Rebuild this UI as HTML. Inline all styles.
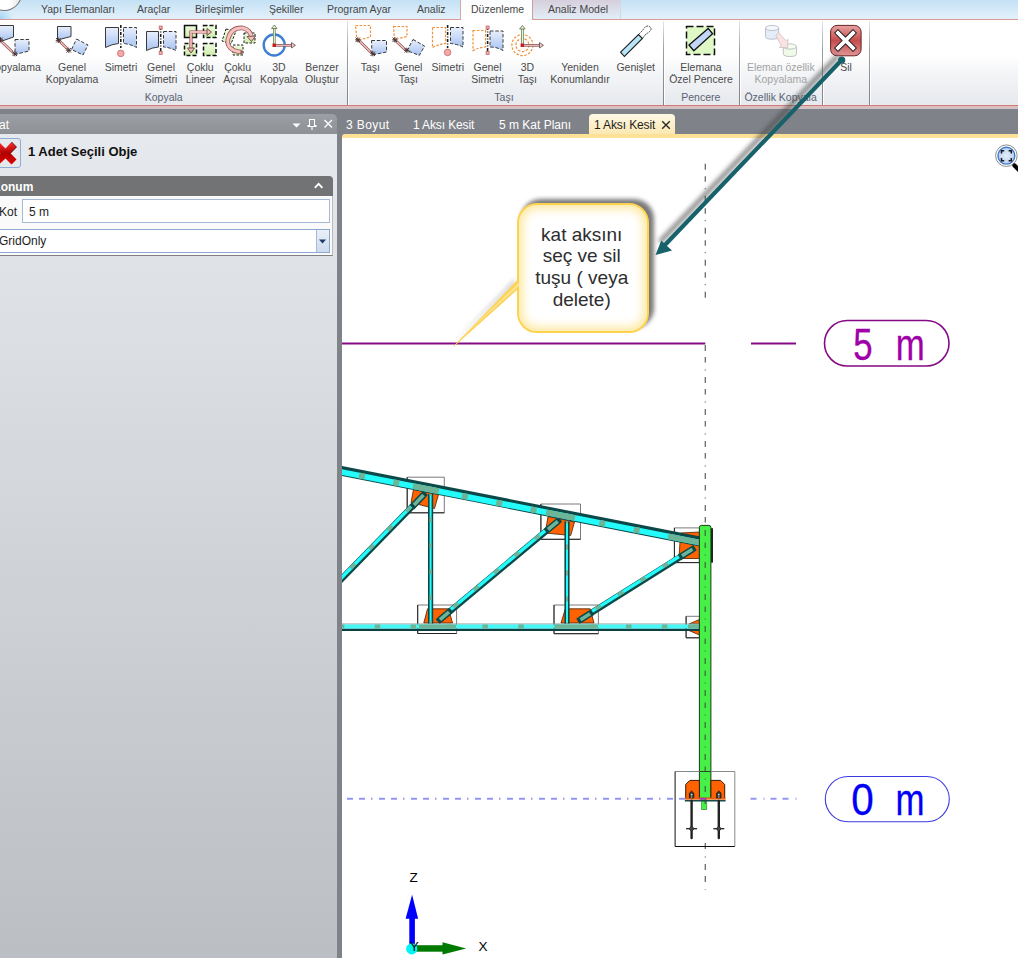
<!DOCTYPE html>
<html><head><meta charset="utf-8">
<style>
*{margin:0;padding:0;box-sizing:border-box}
html,body{width:1018px;height:958px;overflow:hidden;background:#7f8389;font-family:"Liberation Sans",sans-serif}
.a{position:absolute}
#tabstrip{left:0;top:0;width:1018px;height:20px;background:linear-gradient(#c4e1f5,#e3f1fb);border-bottom:1px solid #d99a96}
.rt{position:absolute;top:3px;font-size:10.5px;color:#474747;white-space:nowrap}
#ribbon{left:0;top:20px;width:1018px;height:86px;background:linear-gradient(#ffffff 0%,#ffffff 42%,#f4f5f7 62%,#e6e9ed 100%);border-bottom:1px solid #cf7c79}
#ribbon2{left:0;top:106px;width:1018px;height:3px;background:linear-gradient(#e6b9b9,#c9c5c9)}
.sep{position:absolute;top:21px;width:1px;height:84px;background:linear-gradient(#e6e8eb,#9a9ea4 35%,#80848a);box-shadow:1px 0 0 #fff}
.lbl{position:absolute;font-size:10.5px;color:#4a4a4a;text-align:center;white-space:nowrap;line-height:12px}
.glbl{position:absolute;top:91px;font-size:10.5px;color:#5a6374;text-align:center;white-space:nowrap}
#panel{left:0;top:134px;width:337px;height:824px;background:linear-gradient(#e6e9ee,#bbbfc3)}
#phead{left:0;top:114px;width:337px;height:20px;background:linear-gradient(#9c9fa4,#8d9095);border-top-right-radius:5px}
#canvas{left:342px;top:134px;width:676px;height:824px;background:#fff;border-top:4px solid #fde196;border-top-left-radius:3px}
.dt{position:absolute;top:118px;font-size:12px;color:#fff;white-space:nowrap}
</style></head><body>
<!-- ribbon tab strip -->
<div id="tabstrip" class="a"></div>
<div class="a" style="left:0;top:8px;width:14px;height:11px;background:radial-gradient(ellipse at 0% 100%,#9fd2f3 0%,rgba(190,225,248,0) 70%)"></div>
<div class="a" style="left:-14px;top:-24px;width:36px;height:35px;border-radius:50%;background:radial-gradient(circle at 35% 85%,#fff 30%,#e6e6e6 60%,#b8b8b8 100%);border:1.6px solid #6f7378"></div>
<div class="rt" style="left:41px">Yapı Elemanları</div>
<div class="rt" style="left:137px">Araçlar</div>
<div class="rt" style="left:195px">Birleşimler</div>
<div class="rt" style="left:269px">Şekiller</div>
<div class="rt" style="left:327px">Program Ayar</div>
<div class="rt" style="left:417px">Analiz</div>
<div class="a" style="left:460px;top:0;width:73px;height:21px;background:linear-gradient(#fbfcfd,#ffffff);border:1px solid #d9a7a4;border-top:none;border-bottom:none"></div>
<div class="rt" style="left:471px">Düzenleme</div>
<div class="a" style="left:532px;top:0;width:89px;height:19px;background:linear-gradient(#d5cedb,#e2eff9);border-left:1px solid #d49c9a;border-right:1px solid #d6d6de;border-bottom-left-radius:2px"></div>
<div class="rt" style="left:548px">Analiz Model</div>

<!-- ribbon body -->
<div id="ribbon" class="a"></div>
<div id="ribbon2" class="a"></div>
<div class="sep" style="left:347px"></div>
<div class="sep" style="left:663px"></div>
<div class="sep" style="left:739px"></div>
<div class="sep" style="left:822px"></div>
<div class="sep" style="left:869px"></div>

<!-- ribbon icons -->
<svg class="a" style="left:0;top:0" width="1018" height="110" viewBox="0 0 1018 110">
<defs>
<linearGradient id="gb" x1="0" y1="0" x2="0" y2="1"><stop offset="0" stop-color="#e8effc"/><stop offset="1" stop-color="#a8c3f2"/></linearGradient>
<linearGradient id="gg" x1="0" y1="0" x2="0" y2="1"><stop offset="0" stop-color="#eefbdf"/><stop offset="1" stop-color="#cdeead"/></linearGradient>
<linearGradient id="gr" x1="0" y1="0" x2="0" y2="1"><stop offset="0" stop-color="#e7a2a2"/><stop offset="0.5" stop-color="#c54c4c"/><stop offset="1" stop-color="#e09696"/></linearGradient>
<linearGradient id="gbar" x1="0" y1="0" x2="1" y2="0"><stop offset="0" stop-color="#9fd9f0"/><stop offset="1" stop-color="#c8ecf8"/></linearGradient>
</defs>
<g stroke="#3a3a3a" stroke-width="1" fill="url(#gb)">
 <!-- Kopyalama (cut) -->
 <path d="M-4 25.5H13.5V37L0.5 41.5H-4Z"/>
 <path d="M15 39.5H29V51L15 54.5Z" stroke-dasharray="3.5 1.8"/>
 <!-- Genel Kopyalama -->
 <path d="M57.5 26.5H71V36.5L57.5 40Z"/>
 <path d="M76.5 39L88 45L83 55L71.5 49.5Z" stroke-dasharray="3.5 1.8"/>
 <!-- Simetri -->
 <path d="M105.5 27.5H118.5V43.5Q112 44 105.5 47.5Z"/>
 <path d="M123.5 27.5H136.5V47.5Q130 44 123.5 43.5Z" stroke-dasharray="3.5 1.8"/>
 <!-- Genel Simetri -->
 <path d="M146.5 31.5H158.5V47Q152 47.5 146.5 50.5Z"/>
 <path d="M163.5 31.5H176V50.5Q170 47.5 163.5 47Z" stroke-dasharray="3.5 1.8"/>
 <!-- Taşı group blue shapes -->
 <path d="M371.5 40.5H386.5V52L372 55Z" stroke-dasharray="3.5 1.8"/>
 <path d="M413 39.5L424.6 46L419.3 55.4L407 50.6Z" stroke-dasharray="3.5 1.8"/>
 <path d="M450.5 27.5H463V47Q457 44 450.5 43.5Z" stroke-dasharray="3.5 1.8"/>
 <path d="M490 31H503V50.5Q497 47 490 47Z" stroke-dasharray="3.5 1.8"/>
</g>
<!-- orange dashed shapes -->
<g stroke="#f0913a" stroke-width="1.2" fill="none" stroke-dasharray="2.5 1.5">
 <path d="M355.5 25.5H370.5V37L357 40.5Z"/>
 <path d="M393.5 26.5H407V36.5L394.5 39.5Z"/>
 <path d="M432.5 27.5H445.5V43.5Q439 44 432.5 47.5Z"/>
 <path d="M473 30.5H485.5V47Q479 47.5 473 50.5Z"/>
 <circle cx="522.4" cy="45.1" r="10.5"/>
 <circle cx="522.4" cy="45.1" r="6.5"/>
</g>
<!-- symmetry axes -->
<g stroke="#1e1e1e" stroke-width="1.6" stroke-dasharray="3 1.5 1 1.5">
 <path d="M120.8 25V48"/><path d="M160.7 27V52"/><path d="M447.6 25V48"/><path d="M487.6 27V52"/>
</g>
<g fill="#f4a9a9" stroke="#c46a6a" stroke-width="0.8">
 <circle cx="120.8" cy="53.4" r="3.3"/><circle cx="447.6" cy="52.4" r="3.3"/>
 <rect x="159.2" y="26" width="3" height="3"/><rect x="159.2" y="51.5" width="3" height="3"/>
 <rect x="486.1" y="26" width="3" height="3"/><rect x="486.1" y="51.5" width="3" height="3"/>
</g>
<!-- pink move arrows -->
<g stroke="#8a5050" stroke-width="2.6" stroke-linecap="round"><path d="M2 42L12 51.5"/><path d="M59.5 41L67 48.5"/><path d="M359.5 41L370 51.5"/><path d="M396 41L405 49.5"/></g>
<g stroke="#f6c4c2" stroke-width="1.3" stroke-linecap="round"><path d="M2 42L12 51.5"/><path d="M59.5 41L67 48.5"/><path d="M359.5 41L370 51.5"/><path d="M396 41L405 49.5"/></g>
<path d="M-1.7000000000000002 37.599999999999994L2.7 42.0M2.7 37.599999999999994L-1.7000000000000002 42.0M-2.1 39.8H3.1M0.5 37.199999999999996V42.4M12.600000000000001 51.599999999999994L17.0 56.0M17.0 51.599999999999994L12.600000000000001 56.0M12.200000000000001 53.8H17.400000000000002M14.8 51.199999999999996V56.4M56.099999999999994 38.099999999999994L60.5 42.5M60.5 38.099999999999994L56.099999999999994 42.5M55.699999999999996 40.3H60.9M58.3 37.699999999999996V42.9M66.6 48.099999999999994L71.0 52.5M71.0 48.099999999999994L66.6 52.5M66.2 50.3H71.39999999999999M68.8 47.699999999999996V52.9M355.6 37.599999999999994L360.0 42.0M360.0 37.599999999999994L355.6 42.0M355.2 39.8H360.40000000000003M357.8 37.199999999999996V42.4M370.6 51.599999999999994L375.0 56.0M375.0 51.599999999999994L370.6 56.0M370.2 53.8H375.40000000000003M372.8 51.199999999999996V56.4M392.6 37.599999999999994L397.0 42.0M397.0 37.599999999999994L392.6 42.0M392.2 39.8H397.40000000000003M394.8 37.199999999999996V42.4M404.6 48.099999999999994L409.0 52.5M409.0 48.099999999999994L404.6 52.5M404.2 50.3H409.40000000000003M406.8 47.699999999999996V52.9" stroke="#4a3434" stroke-width="1" fill="none"/>
<!-- Coklu Lineer -->
<g stroke="#111" stroke-width="1.5" fill="url(#gg)">
 <rect x="184.5" y="25.5" width="12" height="12"/>
 <rect x="203.5" y="25.5" width="12.5" height="12" stroke-dasharray="4 2"/>
 <rect x="184.5" y="43.5" width="12" height="12" stroke-dasharray="4 2"/>
 <rect x="203.5" y="43.5" width="12.5" height="12" stroke-dasharray="4 2"/>
</g>
<g fill="none" stroke="#8a4e4e" stroke-width="3.2"><path d="M191 52V32H209"/></g>
<g fill="none" stroke="#f4b9b7" stroke-width="1.8"><path d="M191 52V32H209"/></g>
<path d="M187.5 48L191 53L194.5 48Z M207 28.5L211.5 32L207 35.5Z" fill="#f4b9b7" stroke="#5a3a3a" stroke-width="0.8"/>
<!-- Coklu Acisal -->
<g stroke="#1e1e1e" stroke-width="1" fill="url(#gg)" stroke-dasharray="2.5 1.5">
 <path d="M226 29L236 31L231 44L222 41Z"/>
 <rect x="244" y="33" width="11" height="10"/>
 <rect x="233" y="45" width="10" height="10"/>
</g>
<path d="M240.5 52Q226 50 228 39Q231 27 243 28Q251 30 251.5 38" fill="none" stroke="#9a5a5a" stroke-width="4.6" stroke-linecap="round"/>
<path d="M240.5 52Q226 50 228 39Q231 27 243 28Q251 30 251.5 38" fill="none" stroke="#f6c2c0" stroke-width="3"/>
<path d="M247 36.5L251.5 41.5L255.5 36Z" fill="#f6c2c0" stroke="#5a3a3a" stroke-width="0.8"/>
<!-- 3D Kopyala -->
<circle cx="274.2" cy="45" r="10.5" fill="none" stroke="#3f7fd2" stroke-width="2.4"/>
<path d="M274.3 45V27" stroke="#5a7a4a" stroke-width="2.6"/><path d="M274.3 45V27" stroke="#e6f7d0" stroke-width="1.2"/>
<path d="M271.5 28.5L274.3 25L277 28.5Z" fill="#e6f7d0" stroke="#4a5a3a" stroke-width="0.7"/>
<path d="M274.3 45.3H293" stroke="#7a4a4a" stroke-width="2.6"/><path d="M274.3 45.3H293" stroke="#f6c6c4" stroke-width="1.2"/>
<path d="M291.5 42.5L295.5 45.3L291.5 48Z" fill="#f6c6c4" stroke="#4a3a3a" stroke-width="0.7"/>
<rect x="272.5" y="43.5" width="3.5" height="3.5" fill="#c82020"/>
<!-- 3D Tasi -->
<path d="M522.4 45V27.5" stroke="#5a7a4a" stroke-width="2.6"/><path d="M522.4 45V27.5" stroke="#e6f7d0" stroke-width="1.2"/>
<path d="M519.6 29L522.4 25.5L525.2 29Z" fill="#e6f7d0" stroke="#4a5a3a" stroke-width="0.7"/>
<path d="M522.4 45.3H541" stroke="#7a4a4a" stroke-width="2.6"/><path d="M522.4 45.3H541" stroke="#f6c6c4" stroke-width="1.2"/>
<path d="M539.5 42.5L543.5 45.3L539.5 48Z" fill="#f6c6c4" stroke="#4a3a3a" stroke-width="0.7"/>
<rect x="520.6" y="43.5" width="3.5" height="3.5" fill="#c82020"/>
<!-- Genislet -->
<path d="M638.5 34.5L643 30Q645 26 648 26Q651.5 27 651 29.5Q650 32 646 34L642.4 38.5Z" fill="#fff" stroke="#333" stroke-width="0.9" stroke-dasharray="2 0.8"/>
<path d="M620.6 52.2L638.5 34.5L642.4 38.5L624.4 56.5Z" fill="#b8e6f8" stroke="#1e1e1e" stroke-width="1.1"/>
<!-- Elemana Ozel Pencere -->
<rect x="686.5" y="26.5" width="28" height="28" fill="#def8c6" stroke="#111" stroke-width="1.5" stroke-dasharray="7 3"/>
<path d="M689 45L708.2 28.4L712.6 33.8L693.8 50.7Z" fill="#c2d6fa" stroke="#111" stroke-width="1.3"/>
<!-- Eleman ozellik kopyalama (disabled) -->
<g opacity="0.6">
 <path d="M765.5 28V36.5Q765.5 39.2 772 39.2Q778.7 39.2 778.7 36.5V28" fill="#d3e2f8" stroke="#8a8f99" stroke-width="0.9"/>
 <ellipse cx="772.1" cy="28" rx="6.6" ry="2.6" fill="#eef3fb" stroke="#8a8f99" stroke-width="0.9"/>
 <path d="M783.3 46.5V53.7Q783.3 56.5 790 56.5Q796.5 56.5 796.5 53.7V46.5" fill="#e6f8d8" stroke="#8a8f99" stroke-width="0.9"/>
 <ellipse cx="789.9" cy="46.5" rx="6.6" ry="2.6" fill="#f1fbe9" stroke="#8a8f99" stroke-width="0.9"/>
 <path d="M775.8 35.5L778.6 32.8L786.3 40.9L788 39.3L787.7 47.8L779.4 47.4L781.3 45.6Z" fill="#f8d0d0" stroke="#a08a8a" stroke-width="0.7"/>
</g>
<!-- Sil -->
<rect x="830.6" y="25.4" width="30.5" height="30.4" rx="6.5" fill="url(#gr)" stroke="#6a2222" stroke-width="1"/>
<path d="M836 31L855 50M855 31L836 50" stroke="#111" stroke-width="5.6"/>
<path d="M836.6 31.6L854.4 49.4M854.4 31.6L836.6 49.4" stroke="#fff" stroke-width="3.8"/>
</svg>

<!-- ribbon labels -->
<div class="lbl" style="left:-45.5px;top:61px;width:120px">Kopyalama</div>
<div class="lbl" style="left:12.0px;top:61px;width:120px">Genel<br>Kopyalama</div>
<div class="lbl" style="left:61.0px;top:61px;width:120px">Simetri</div>
<div class="lbl" style="left:101.0px;top:61px;width:120px">Genel<br>Simetri</div>
<div class="lbl" style="left:140.3px;top:61px;width:120px">Çoklu<br>Lineer</div>
<div class="lbl" style="left:177.6px;top:61px;width:120px">Çoklu<br>Açısal</div>
<div class="lbl" style="left:219.0px;top:61px;width:120px">3D<br>Kopyala</div>
<div class="lbl" style="left:262.0px;top:61px;width:120px">Benzer<br>Oluştur</div>
<div class="lbl" style="left:310.4px;top:61px;width:120px">Taşı</div>
<div class="lbl" style="left:348.4px;top:61px;width:120px">Genel<br>Taşı</div>
<div class="lbl" style="left:387.8px;top:61px;width:120px">Simetri</div>
<div class="lbl" style="left:427.5px;top:61px;width:120px">Genel<br>Simetri</div>
<div class="lbl" style="left:467.4px;top:61px;width:120px">3D<br>Taşı</div>
<div class="lbl" style="left:520.0px;top:61px;width:120px">Yeniden<br>Konumlandır</div>
<div class="lbl" style="left:575.7px;top:61px;width:120px">Genişlet</div>
<div class="lbl" style="left:641.0px;top:61px;width:120px">Elemana<br>Özel Pencere</div>
<div class="lbl" style="left:720.8px;top:61px;width:120px;color:#a3a3a3">Eleman özellik<br>Kopyalama</div>
<div class="lbl" style="left:786.0px;top:61px;width:120px">Sil</div>
<div class="glbl" style="left:103.7px;width:120px">Kopyala</div>
<div class="glbl" style="left:444.0px;width:120px">Taşı</div>
<div class="glbl" style="left:640.8px;width:120px">Pencere</div>
<div class="glbl" style="left:720.6px;width:120px">Özellik Kopyala</div>

<!-- left panel -->
<div id="phead" class="a"></div>
<div class="a" style="left:-1px;top:118px;font-size:12px;color:#fff">at</div>
<div id="panel" class="a"></div>
<!-- panel header icons -->
<svg class="a" style="left:285px;top:114px" width="52" height="20" viewBox="285 114 52 20">
 <path d="M292.5 123.5H300.5L296.5 127.5Z" fill="#fff"/>
 <path d="M309.5 119.5H314.5V125.5H316V126.5H308V125.5H309.5Z" fill="none" stroke="#fff" stroke-width="1.1"/>
 <path d="M312 126.5V130" stroke="#fff" stroke-width="1.2"/>
 <path d="M324.5 120L332 127.5M332 120L324.5 127.5" stroke="#fff" stroke-width="1.3"/>
</svg>
<!-- X button -->
<div class="a" style="left:-3px;top:138px;width:24px;height:30px;border:1px solid #8eaad6;border-radius:3px"></div>
<svg class="a" style="left:0;top:138px" width="22" height="30" viewBox="0 138 22 30">
 <defs><linearGradient id="rx" x1="0" y1="0" x2="0" y2="1"><stop offset="0" stop-color="#ff3030"/><stop offset="0.5" stop-color="#b00000"/><stop offset="1" stop-color="#e00000"/></linearGradient></defs>
 <path d="M-6 147L-1 142L5.5 148.5L11.5 142L16.5 147L10.5 153.2L16.5 159.5L11.5 164.5L5.5 158.5L-1 164.5L-6 159.5L0.5 153.2Z" fill="url(#rx)"/>
 <path d="M11.5 142L16.5 147L10.5 153.2" fill="none" stroke="#3a0000" stroke-width="1" opacity="0.8"/>
</svg>
<div class="a" style="left:28px;top:144px;font-size:13px;font-weight:bold;color:#111;white-space:nowrap">1 Adet Seçili Obje</div>
<!-- Konum card -->
<div class="a" style="left:-4px;top:176px;width:337px;height:20px;background:#727375;border-top-right-radius:4px"></div>
<div class="a" style="left:-8px;top:180px;font-size:12px;font-weight:bold;color:#fff;white-space:nowrap">Konum</div>
<svg class="a" style="left:312px;top:180px" width="14" height="10"><path d="M2.8 7.8L6.6 3.8L10.4 7.8" fill="none" stroke="#fff" stroke-width="1.8"/></svg>
<div class="a" style="left:-4px;top:196px;width:337px;height:60px;background:#fafafa;border-right:1px solid #b9bbbf;border-bottom:1px solid #7d7f82"></div>
<div class="a" style="left:-1px;top:205px;font-size:12px;color:#1e1e1e">Kot</div>
<div class="a" style="left:22px;top:199px;width:308px;height:24px;background:#fff;border:1px solid #a6bad8"></div>
<div class="a" style="left:29px;top:205px;font-size:12px;color:#1e1e1e">5 m</div>
<div class="a" style="left:-3px;top:229px;width:333px;height:24px;background:#fff;border:1px solid #8ea8cf"></div>
<div class="a" style="left:316px;top:230px;width:13px;height:22px;background:linear-gradient(#eaf0f8,#cddbee);border-left:1px solid #a6bad8"></div>
<svg class="a" style="left:316px;top:230px" width="13" height="22"><path d="M3 9.5H10L6.5 13.5Z" fill="#1f3a66"/></svg>
<div class="a" style="left:-1px;top:234px;font-size:12px;color:#1e1e1e">GridOnly</div>


<!-- document tabs -->
<div class="dt" style="left:346px;letter-spacing:0.4px">3 Boyut</div>
<div class="dt" style="left:413px;letter-spacing:-0.12px">1 Aksı Kesit</div>
<div class="dt" style="left:499px">5 m Kat Planı</div>
<div class="a" style="left:589px;top:114px;width:86px;height:22px;border-radius:4px 4px 0 0;background:linear-gradient(#fdf8e6,#fbe7ad)"></div>
<div class="dt" style="left:594px;color:#1e1e1e;letter-spacing:-0.12px">1 Aksı Kesit</div>
<svg class="a" style="left:660px;top:119px" width="12" height="12"><path d="M2.2 2.2L9.8 9.8M9.8 2.2L2.2 9.8" stroke="#2a2a2a" stroke-width="1.4"/></svg>

<div id="canvas" class="a"></div>
<!-- canvas drawing -->
<svg class="a" style="left:0;top:0" width="1018" height="958" viewBox="0 0 1018 958">
<defs>
<clipPath id="cv"><rect x="342" y="138" width="676" height="820"/></clipPath>
<filter id="sh1" x="-20%" y="-20%" width="140%" height="140%"><feGaussianBlur stdDeviation="2.2"/></filter>
<filter id="sh2" x="-20%" y="-20%" width="140%" height="140%"><feGaussianBlur stdDeviation="2.5"/></filter>
<radialGradient id="mg" cx="0.5" cy="0.5" r="0.5"><stop offset="0" stop-color="#e6eef9"/><stop offset="1" stop-color="#b9cff0"/></radialGradient>
</defs>
<g clip-path="url(#cv)">
<circle cx="1006.4" cy="155.7" r="10.8" fill="#fff" stroke="#8a8a8a" stroke-width="1"/>
<circle cx="1006.4" cy="155.7" r="8.4" fill="url(#mg)" stroke="#3f78c8" stroke-width="1.4"/>
<path d="M1001.5 153.5V150.8H1004.2 M1008.6 150.8H1011.3V153.5 M1011.3 158V160.7H1008.6 M1004.2 160.7H1001.5V158" fill="none" stroke="#1a1a1a" stroke-width="1.5"/>
<path d="M1014.5 165.5L1020 171" stroke="#000" stroke-width="4.2" stroke-linecap="round"/>
<path d="M705.3 163.8V298" stroke="#6a6a6a" stroke-width="1.3" stroke-dasharray="6 6.5 5.5 6.5 1 6.5"/>
<path d="M705.3 345V771" stroke="#6a6a6a" stroke-width="1.3" stroke-dasharray="6 6 5.5 7 1 6.5"/>
<path d="M705.3 843V890" stroke="#6a6a6a" stroke-width="1.3" stroke-dasharray="6 7.5 1 6.5 6 6"/>
<path d="M342 343.5H705.3 M751 343.5H796" stroke="#850a85" stroke-width="2"/>
<rect x="824.5" y="320.5" width="124.5" height="45.5" rx="22.75" fill="#fff" stroke="#850a85" stroke-width="1.6"/>
<text x="0" y="0" transform="translate(853.2 359.6) scale(0.8 1)" font-family="Liberation Sans" font-size="43.5" fill="#a000a8" stroke="#a000a8" stroke-width="0.3">5</text>
<text x="0" y="0" transform="translate(895.8 359.6) scale(0.8 1)" font-family="Liberation Sans" font-size="43.5" fill="#a000a8" stroke="#a000a8" stroke-width="0.3">m</text>
<path d="M347 798.8H706" stroke="#9696f2" stroke-width="2" stroke-dasharray="6 6 6 6 1.5 6.5"/>
<path d="M750.5 798.8H797" stroke="#9696f2" stroke-width="2" stroke-dasharray="6 7 1 6 6 6"/>
<rect x="825.3" y="776.5" width="124" height="45.2" rx="22.6" fill="#fff" stroke="#3b3be0" stroke-width="1.1"/>
<text x="0" y="0" transform="translate(851.2 815) scale(0.93 1)" font-family="Liberation Sans" font-size="43.5" fill="#0000f8" stroke="#0000f8" stroke-width="0.3">0</text>
<text x="0" y="0" transform="translate(895.5 815) scale(0.8 1)" font-family="Liberation Sans" font-size="43.5" fill="#0000f8" stroke="#0000f8" stroke-width="0.3">m</text>
<path d="M413.5 489.5L438.5 494.5L434.5 508.5L411 502.5Z" fill="#ff6200" stroke="#4a2000" stroke-width="0.8"/>
<path d="M548 516.5L574.5 522L570.7 535.5L545.2 533Z" fill="#ff6200" stroke="#4a2000" stroke-width="0.8"/>
<path d="M680.5 533L699.4 532L699.4 558.5L679 558.5Z" fill="#ff6200" stroke="#4a2000" stroke-width="0.8"/>
<path d="M423.8 623L427.5 608.8L448.6 608.8L452.5 623Z" fill="#ff6200" stroke="#4a2000" stroke-width="0.8"/>
<path d="M561 623L565.3 608.8L590.2 608.8L594 623Z" fill="#ff6200" stroke="#4a2000" stroke-width="0.8"/>
<path d="M689 624L699.4 619.5L699.4 624Z" fill="#ff6200" stroke="#4a2000" stroke-width="0.8"/>
<path d="M689 630.5L699.4 630.5L699.4 635Z" fill="#ff6200" stroke="#4a2000" stroke-width="0.8"/>
<path d="M407.2 477.2H444.3V512.8H407.2Z" fill="none" stroke="#7a7a7a" stroke-width="1"/>
<path d="M407.2 477.2V512.8H444.3" fill="none" stroke="#222" stroke-width="1"/>
<path d="M417.7 605.0H456.6V633.5H417.7Z" fill="none" stroke="#7a7a7a" stroke-width="1"/>
<path d="M417.7 605.0V633.5H456.6" fill="none" stroke="#222" stroke-width="1"/>
<path d="M540.9 504.0H580.5V539.3H540.9Z" fill="none" stroke="#7a7a7a" stroke-width="1"/>
<path d="M540.9 504.0V539.3H580.5" fill="none" stroke="#222" stroke-width="1"/>
<path d="M554.0 605.0H598.4V633.7H554.0Z" fill="none" stroke="#7a7a7a" stroke-width="1"/>
<path d="M554.0 605.0V633.7H598.4" fill="none" stroke="#222" stroke-width="1"/>
<path d="M674.4 527.9H699.4V562.6H674.4Z" fill="none" stroke="#7a7a7a" stroke-width="1"/>
<path d="M674.4 527.9V562.6H699.4" fill="none" stroke="#222" stroke-width="1"/>
<path d="M686.1 616.3H699.4V637.8H686.1Z" fill="none" stroke="#7a7a7a" stroke-width="1"/>
<path d="M686.1 616.3V637.8H699.4" fill="none" stroke="#222" stroke-width="1"/>
<path d="M430.6 494.0L430.6 624.0" stroke="#0c4848" stroke-width="5.2"/><path d="M430.6 494.0L430.6 624.0" stroke="#24fbfb" stroke-width="2.0"/><path d="M430.6 494.0L430.6 624.0" stroke="#6cb598" stroke-width="2.0" stroke-dasharray="5 21" stroke-dashoffset="3"/>
<path d="M567.0 521.5L567.0 624.0" stroke="#0c4848" stroke-width="5.2"/><path d="M567.0 521.5L567.0 624.0" stroke="#24fbfb" stroke-width="2.0"/><path d="M567.0 521.5L567.0 624.0" stroke="#6cb598" stroke-width="2.0" stroke-dasharray="5 21" stroke-dashoffset="3"/>
<path d="M320.0 601.0L423.5 495.0" stroke="#0c4848" stroke-width="6.2"/><path d="M319.4 600.4L422.9 494.4" stroke="#24fbfb" stroke-width="3.4"/><path d="M319.4 600.4L422.9 494.4" stroke="#6cb598" stroke-width="3.4" stroke-dasharray="6 20.5" stroke-dashoffset="8"/>
<path d="M440.0 619.7L557.8 521.3" stroke="#0c4848" stroke-width="6.2"/><path d="M439.4 619.0L557.2 520.6" stroke="#24fbfb" stroke-width="3.4"/><path d="M439.4 619.0L557.2 520.6" stroke="#6cb598" stroke-width="3.4" stroke-dasharray="6 20.5" stroke-dashoffset="8"/>
<path d="M580.5 619.7L692.4 549.3" stroke="#0c4848" stroke-width="6.2"/><path d="M580.0 618.9L691.9 548.5" stroke="#24fbfb" stroke-width="3.4"/><path d="M580.0 618.9L691.9 548.5" stroke="#6cb598" stroke-width="3.4" stroke-dasharray="6 20.5" stroke-dashoffset="8"/>
<path d="M423.5 495L414 505" stroke="#0c4848" stroke-width="6.2" stroke-linecap="square"/>
<path d="M423.5 495L414 505" stroke="#6cb598" stroke-width="3.6"/>
<path d="M440 619.7L449 612" stroke="#0c4848" stroke-width="6.2" stroke-linecap="square"/>
<path d="M440 619.7L449 612" stroke="#6cb598" stroke-width="3.6"/>
<path d="M557.8 521.3L548 529.5" stroke="#0c4848" stroke-width="6.2" stroke-linecap="square"/>
<path d="M557.8 521.3L548 529.5" stroke="#6cb598" stroke-width="3.6"/>
<path d="M580.5 619.7L590 613.7" stroke="#0c4848" stroke-width="6.2" stroke-linecap="square"/>
<path d="M580.5 619.7L590 613.7" stroke="#6cb598" stroke-width="3.6"/>
<path d="M692.4 549.3L682 555.8" stroke="#0c4848" stroke-width="6.2" stroke-linecap="square"/>
<path d="M692.4 549.3L682 555.8" stroke="#6cb598" stroke-width="3.6"/>
<path d="M342 624H699.4" stroke="#8a9a9a" stroke-width="1"/>
<path d="M342 629.7H699.4" stroke="#0c4040" stroke-width="2.6"/>
<path d="M342 626.5H699.4" stroke="#44f8f8" stroke-width="4"/>
<path d="M342 626.5H699.4" stroke="#6cb598" stroke-width="4" stroke-dasharray="5.5 30.4" stroke-dashoffset="-32.7"/>
<path d="M419 626.5H456 M555 626.5H598 M688 626.5H699.4" stroke="#6cb598" stroke-width="4"/>
<path d="M330 468.64L699.4 541.41" stroke="#0c4848" stroke-width="9.8"/>
<path d="M330 469.74L699.4 542.51" stroke="#24fbfb" stroke-width="5.8"/>
<path d="M330 469.74L699.4 542.51" stroke="#6cb598" stroke-width="5.8" stroke-dasharray="6 29" stroke-dashoffset="-29.5"/>
<path d="M413 486.09L439 491.21" stroke="#6cb598" stroke-width="5.8"/>
<path d="M546 512.29L575 518.00" stroke="#6cb598" stroke-width="5.8"/>
<path d="M672 537.11L699.4 542.51" stroke="#6cb598" stroke-width="5.8"/>
<rect x="711" y="528.2" width="2" height="34.4" fill="#1a2a1a"/>
<path d="M699.4 798.4V527.4Q699.4 525.4 701.4 525.4H708.9Q710.9 525.4 710.9 527.4V798.4Z" fill="#46f046" stroke="#173a17" stroke-width="1"/>
<rect x="701.6" y="798" width="5.2" height="11.6" fill="#46f046" stroke="#2a7a2a" stroke-width="0.6"/>
<path d="M705.2 530V808" stroke="#3a6a3a" stroke-width="1.2" stroke-dasharray="6 6.5 5.5 6.5 1 6.5"/>
<path d="M675.1 771.5H734.8V846.5" fill="none" stroke="#8a8a8a" stroke-width="1"/>
<path d="M675.1 771.5V846.5H734.8" fill="none" stroke="#111" stroke-width="1"/>
<path d="M699.4 771.5H710.9" stroke="#2a4a2a" stroke-width="1"/>
<path d="M685.7 798.6V784.5L689.8 780.4H699.4V798.6Z" fill="#ff6200" stroke="#3a1a00" stroke-width="1"/>
<path d="M724.7 798.6V784.5L720.6 780.4H710.9V798.6Z" fill="#ff6200" stroke="#3a1a00" stroke-width="1"/>
<rect x="685" y="797.6" width="40.6" height="2" fill="#e86010"/>
<path d="M684.8 800.7H725.6" stroke="#1a4a4a" stroke-width="1.6"/>
<path d="M700 798.8H706" stroke="#a030e0" stroke-width="1.5"/>
<path d="M689.4 797.8V793.2L691.6 791L693.8000000000001 793.2V797.8Z" fill="#3a3a3a" stroke="#111" stroke-width="0.8"/>
<circle cx="691.6" cy="794.6" r="0.9" fill="#ddd"/><circle cx="691.6" cy="797" r="0.8" fill="#bbb"/>
<path d="M691.6 801V838" stroke="#222" stroke-width="2.4" stroke-linecap="round"/>
<path d="M686.1 828.7H697.1" stroke="#222" stroke-width="1.3"/>
<path d="M689.1 828.7L691.6 826L694.1 828.7L691.6 831.4Z" fill="#444" stroke="#222" stroke-width="0.8"/>
<path d="M716.5999999999999 797.8V793.2L718.8 791L721.0 793.2V797.8Z" fill="#3a3a3a" stroke="#111" stroke-width="0.8"/>
<circle cx="718.8" cy="794.6" r="0.9" fill="#ddd"/><circle cx="718.8" cy="797" r="0.8" fill="#bbb"/>
<path d="M718.8 801V838" stroke="#222" stroke-width="2.4" stroke-linecap="round"/>
<path d="M713.3 828.7H724.3" stroke="#222" stroke-width="1.3"/>
<path d="M716.3 828.7L718.8 826L721.3 828.7L718.8 831.4Z" fill="#444" stroke="#222" stroke-width="0.8"/>
<text x="409.5" y="881.8" font-family="Liberation Sans" font-size="13.5" fill="#000">Z</text>
<path d="M409.3 918H414.9V947H409.3Z" fill="#0000ff"/>
<path d="M412.1 894.8L418.1 918.7H405.6Z" fill="#0000ff"/>
<path d="M412 945.2H443V951.7H412Z" fill="#007a00"/>
<path d="M442.5 942.2L466.2 948.4L442.5 954.6Z" fill="#007a00"/>
<circle cx="411.7" cy="948.9" r="5.6" fill="#00f5f5"/>
<text x="409.8" y="950.8" font-family="Liberation Sans" font-size="13.5" fill="#000">Y</text>
<text x="478.5" y="950.8" font-family="Liberation Sans" font-size="13.5" fill="#000">X</text>
</g>

</svg>
<!-- /canvas drawing -->
<!-- bubble (html) -->
<div class="a" style="left:521px;top:199px;width:133px;height:129px;border-radius:20px;background:rgba(70,70,70,0.72);filter:blur(2.3px)"></div>
<div class="a" style="left:516.6px;top:203px;width:132.7px;height:129.6px;border-radius:20px;background:#fff;border:2px solid #fdd24e;box-shadow:inset 0 0 11px 3px #fde595"></div>
<div class="a" style="left:515.4px;top:203px;width:132.7px;text-align:center;font-size:19px;line-height:21.9px;color:#2e2e2e;padding-top:20.5px">kat aksını<br>seç ve sil<br>tuşu ( veya<br>delete)</div>
<!-- callout + arrow overlay -->
<svg class="a" style="left:0;top:0" width="1018" height="958" viewBox="0 0 1018 958">
<defs>
<filter id="bsh" x="-30%" y="-30%" width="160%" height="160%"><feGaussianBlur stdDeviation="2"/></filter>
<filter id="ash" x="-10%" y="-10%" width="120%" height="120%"><feGaussianBlur stdDeviation="2.2"/></filter>
<radialGradient id="bubg" cx="0.5" cy="0.5" r="0.62">
 <stop offset="0.55" stop-color="#ffffff"/><stop offset="0.85" stop-color="#fef3cf"/><stop offset="1" stop-color="#fddc7a"/>
</radialGradient>
<linearGradient id="tailg" x1="0" y1="0" x2="1" y2="0"><stop offset="0" stop-color="#fdd35a"/><stop offset="1" stop-color="#fee9a6"/></linearGradient>
</defs>
<!-- tail -->
<path d="M515 278L452 344L515 285Z" fill="#888" opacity="0.35" filter="url(#bsh)"/>
<path d="M518.5 279.3L453.8 346.2L518.5 288.3Z" fill="#fdd458" stroke="#fccf4c" stroke-width="0.8"/>
<path d="M519 283L461 338L519 285.8Z" fill="#fee49a"/>
<!-- arrow shadow -->
<g filter="url(#ash)" opacity="0.6">
<path d="M837.7 56L660 242" stroke="#444" stroke-width="5"/>
</g>
<!-- arrow -->
<path d="M841.7 60L664 246" stroke="#17616a" stroke-width="4.2"/>
<circle cx="841.7" cy="60" r="3.6" fill="#17616a"/>
<path d="M655.5 255L661.3 240.4L667 246L672 250.4Z" fill="#17616a"/>
</svg>

</body></html>
